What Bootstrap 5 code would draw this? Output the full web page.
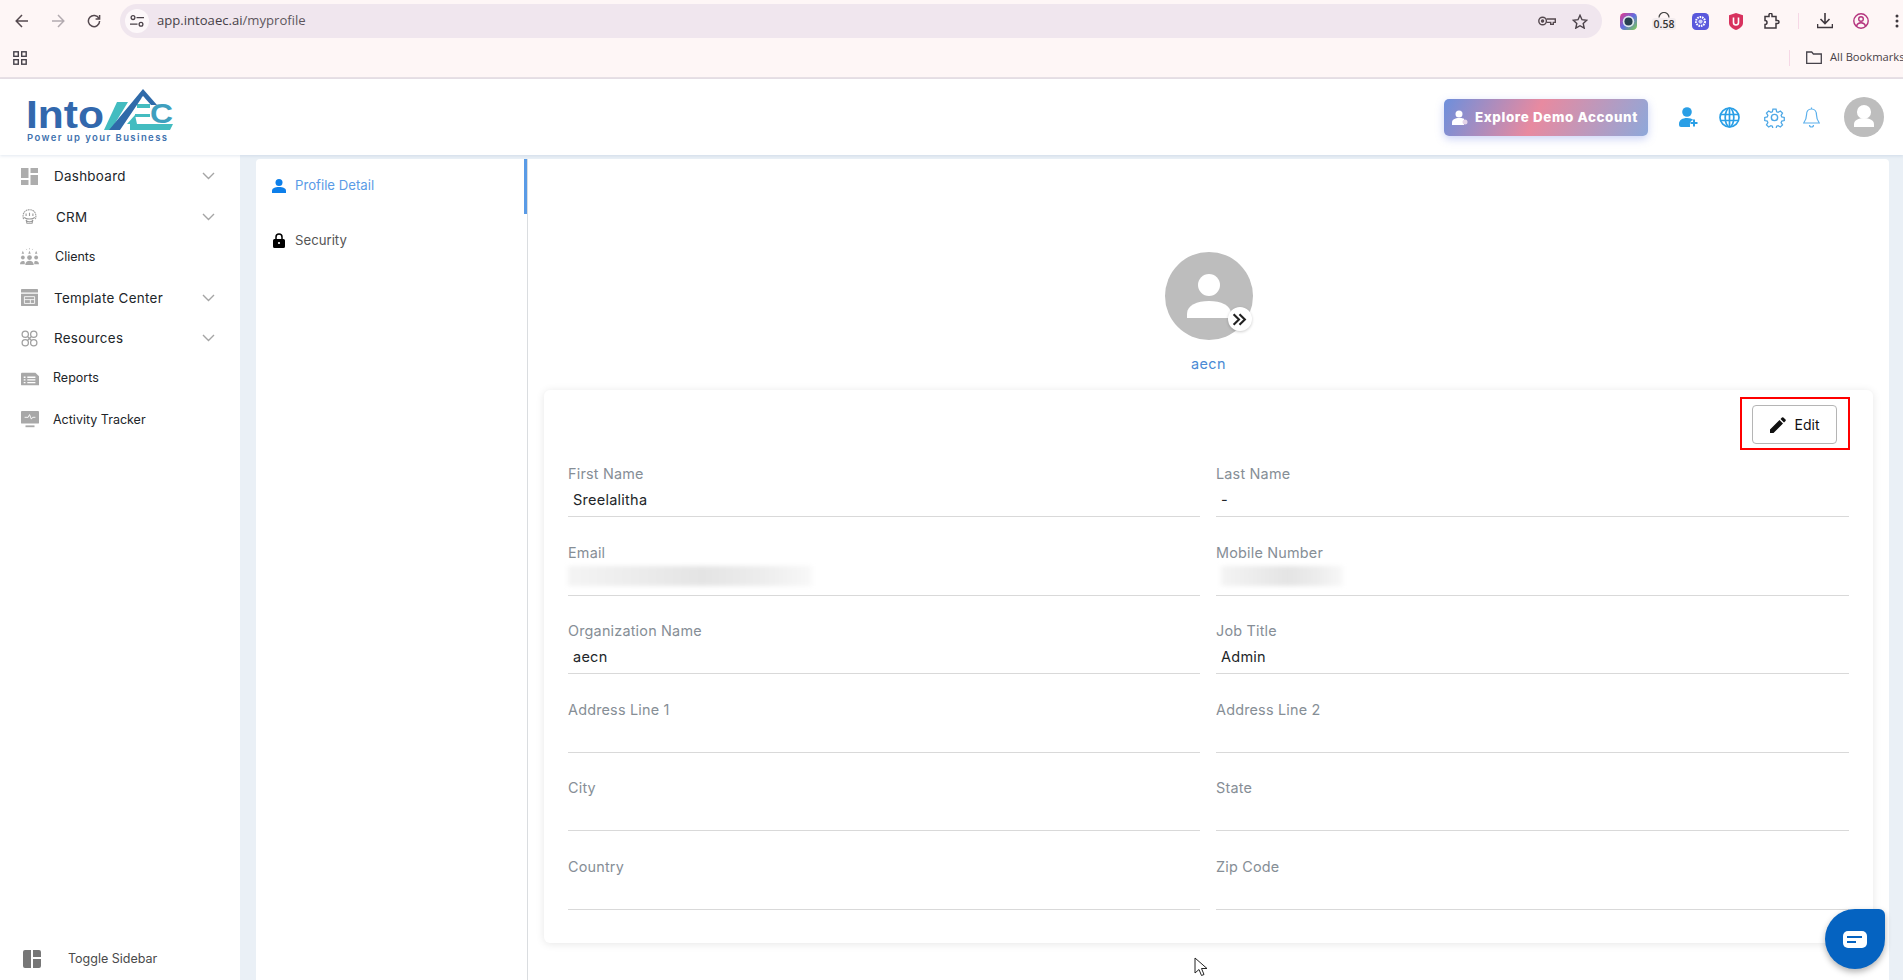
<!doctype html>
<html lang="en"><head><meta charset="utf-8"><title>IntoAEC profile</title>
<link href="https://cdn.jsdelivr.net/npm/bootstrap@5.3.0/dist/css/bootstrap.min.css" rel="stylesheet">
<style>
html,body{height:980px;overflow:hidden}
body{font-family:Inter,"Liberation Sans",sans-serif;background:#eaf0f6;color:#212529;font-size:14px;width:1903px}
.chrome-wrap{height:79px;background:#fef6f6;border-bottom:2px solid #e9e1e6;font-family:"Open Sans","Liberation Sans",sans-serif;color:#474147}
.tool-row{height:42px;padding:0 0 0 4px}
.tool-btn{width:36px;height:34px;flex:none}
.url-pill{width:1482px;height:34px;margin-left:8px;background:#f0e6ee;border-radius:17px;padding:0 14px 0 5px;flex:none}
.site-chip{width:24px;height:24px;background:#fdf8fa;border-radius:50%;flex:none}
.url-text{font-size:13.1px;margin-left:8px;color:#463f47}
.url-path{color:#5d565d}
.ext-first{margin-left:8px}
.ext-sep{width:1px;height:16px;background:#f6d8e6;margin:0 8px 0 8px;flex:none}
.gauge-num{font-size:10.5px;font-weight:600;line-height:12px;background:#f3ecee;border-radius:3px;padding:0 2px;color:#333}
.book-row{height:31px;padding-left:13px}
.book-sep{width:1px;height:16px;background:#f6d8e6;margin-left:1776px;flex:none}
.book-text{font-size:11.2px;white-space:nowrap}
.app-head{height:76px;background:#fff;box-shadow:0 1px 3px rgba(90,130,170,.18);position:relative;z-index:2;padding-right:19px}
.logo-box{margin-left:24px;line-height:0}
.demo-btn{width:204px;height:37px;border-radius:5px;background:linear-gradient(115deg,#6d8fdc 0%,#e88aa0 45%,#8ea8da 100%);box-shadow:0 3px 8px rgba(110,130,230,.35);color:#fff;font-size:13.4px;font-weight:800;margin-right:31px;padding-left:8px;flex:none}
.demo-btn span{margin-left:7px;letter-spacing:.62px;white-space:nowrap}
.head-ico{flex:none}
.head-avatar{margin-left:24px}
.body-row{height:825px}
.side-bar{width:240px;background:#fff;flex:none;padding-top:1px}
.side-item{height:40.5px;padding-left:21px;color:#212529;white-space:nowrap;font-size:13.4px;letter-spacing:.3px}
.side-mini{font-size:12.5px;letter-spacing:0}
.side-last{margin-top:1px}
.side-ico{width:17px;height:17px;flex:none;margin-right:16px}
.side-ico-b{margin-right:18px}
.side-ico-c{width:19px;height:19px;margin-left:-1px;margin-right:16px}
.side-ico-d{width:18px;height:18px;margin-right:14px}
.side-chev{margin-left:auto;margin-right:25px}
.toggle-item{padding:0 0 0 23px;height:20px;margin-bottom:11px;font-size:12.5px;color:#4a4a4a}
.toggle-item svg{margin-right:27px}
.main-panel{width:1633px;margin:4px 0 0 16px;background:#fff;border-radius:4px 4px 0 0;flex:none}
.sub-nav{width:272px;border-right:1px solid #dadde0;flex:none;font-size:13.2px}
.sub-item{height:55px;padding:0 0 2px 16px;color:#555}
.sub-item svg{margin-right:9px}
.sub-active{color:#5a9be6;box-shadow:inset -3px 0 0 #5a9be6}
.profile-area{flex:1;padding:0 16px 0 16px;min-width:0}
.avatar-stack{padding-top:93px;height:231px}
.big-avatar{position:relative;width:88px;height:88px}
.swap-badge{position:absolute;right:1px;bottom:9px;width:24px;height:24px;border-radius:50%;background:#fff;box-shadow:0 1px 3px rgba(0,0,0,.2)}
.who-name{color:#4a8ad4;font-size:14.4px;letter-spacing:.5px;margin-top:14px;line-height:20px}
.info-card{height:553px;border-radius:6px;box-shadow:0 1px 8px rgba(0,0,0,.1);padding:7px 24px 0 24px;background:#fff}
.mark-box{width:110px;height:53px;border:2.5px solid #f00;margin:0 -1px 0 auto;display:flex;align-items:center;justify-content:center;padding:2px 1px 0 0}
.edit-btn{width:85px;height:39px;border:1px solid #b5b5b5;border-radius:4px;background:#fff;font-size:14px;color:#111;padding:0}
.edit-btn svg{margin-right:9px}
.field-grid{display:grid;grid-template-columns:632px 633px;column-gap:16px;margin-top:13px}
.field-cell{height:78.6px}
.field-lab{color:#868e96;font-size:14.4px;letter-spacing:.2px;line-height:20px;padding-top:1px}
.field-val{height:33px;border-bottom:1px solid #d9d9d9;padding:3px 0 0 5px;font-size:14.5px;letter-spacing:.25px;line-height:26px;color:#212529}
.blur-bar{height:20px;margin:0 0 0 -5px;background:linear-gradient(90deg,#f4f4f4,#e4e4e4 55%,#ededed 80%,#f8f8f8);filter:blur(2px)}
.blur-short{margin-left:0}
.chat-drop{position:fixed;left:1825px;top:909px;width:60px;height:60px;background:#0563c1;border-radius:50% 6px 50% 50%;box-shadow:0 3px 6px rgba(0,0,0,.3)}
.mouse-arrow{position:fixed;left:1194px;top:957px}
</style></head>
<body>
<div class="chrome-wrap">
  <div class="tool-row d-flex align-items-center">
    <div class="tool-btn d-flex align-items-center justify-content-center"><svg width="14" height="14" viewBox="0 0 14 14" fill="none" stroke="#55494f" stroke-width="1.5"><path d="M13 7H1.5M7 1 1.2 7 7 13"/></svg></div>
    <div class="tool-btn d-flex align-items-center justify-content-center"><svg width="14" height="14" viewBox="0 0 14 14" fill="none" stroke="#b3abb0" stroke-width="1.5"><path d="M1 7h11.5M7 1l5.8 6L7 13"/></svg></div>
    <div class="tool-btn d-flex align-items-center justify-content-center"><svg width="14" height="14" viewBox="0 0 14 14" fill="none" stroke="#55494f" stroke-width="1.5"><path d="M12 4.5A5.6 5.6 0 1 0 12.6 7M12.6 1v4h-4"/></svg></div>
    <div class="url-pill d-flex align-items-center">
      <div class="site-chip d-flex align-items-center justify-content-center"><svg width="14" height="12" viewBox="0 0 14 12" fill="none" stroke="#4b4249" stroke-width="1.3"><circle cx="3" cy="2.6" r="1.9"/><path d="M6.5 2.6H14M0 9.2h7.5"/><circle cx="11" cy="9.2" r="1.9"/></svg></div>
      <span class="url-text">app.intoaec.ai<span class="url-path">/myprofile</span></span>
      <svg class="ms-auto" width="18" height="10" viewBox="0 0 18 10" fill="none" stroke="#55494f" stroke-width="1.4"><circle cx="4.6" cy="5" r="3.8"/><circle cx="4.6" cy="5" r="1" fill="#55494f"/><path d="M8.5 3h8.8v3.4h-2v2h-2.6v-2H8.5"/></svg>
      <svg class="ms-3" width="16" height="15" viewBox="0 0 16 15" fill="none" stroke="#4b4249" stroke-width="1.4"><path d="m8 1.3 2 4.4 4.7.5-3.500 3.200 1 4.700L8 11.700l-4.200 2.400 1-4.700L1.300 6.200 6 5.700z"/></svg>
    </div>
    <div class="tool-btn ext-first d-flex align-items-center justify-content-center"><svg width="17" height="17" viewBox="0 0 16 16"><defs><linearGradient id="rb" x1="0" y1="0" x2="1" y2="1"><stop offset="0" stop-color="#e8358a"/><stop offset=".5" stop-color="#5f6ee0"/><stop offset="1" stop-color="#7fd24a"/></linearGradient></defs><rect width="16" height="16" rx="4" fill="url(#rb)"/><circle cx="8" cy="8" r="5.400" fill="#dfe8ee"/><circle cx="8" cy="8" r="3.800" fill="#28414f"/></svg></div>
    <div class="tool-btn d-flex flex-column align-items-center justify-content-center"><svg width="12" height="6" viewBox="0 0 12 6" fill="none" stroke="#444" stroke-width="1.200"><path d="M1 5.500a5 5 0 0 1 10 0M4 1l2-1 2 1"/></svg><span class="gauge-num">0.58</span></div>
    <div class="tool-btn d-flex align-items-center justify-content-center"><svg width="17" height="17" viewBox="0 0 16 16"><rect width="16" height="16" rx="4" fill="#5a58dc"/><circle cx="8" cy="8" r="4.200" fill="none" stroke="#fff" stroke-width="2" stroke-dasharray="1.500 .8"/><circle cx="8" cy="8" r="2" fill="#cfd0fa"/></svg></div>
    <div class="tool-btn d-flex align-items-center justify-content-center"><svg width="14" height="17" viewBox="0 0 14 17"><path d="M7 0 14 2.200V10c0 3-3 5.500-7 7-4-1.500-7-4-7-7V2.200z" fill="#d8325e"/><path d="M4.500 4.500v5a2.500 2.500 0 0 0 5 0v-5" fill="none" stroke="#fff" stroke-width="1.600"/></svg></div>
    <div class="tool-btn d-flex align-items-center justify-content-center"><svg width="16" height="16" viewBox="0 0 16 16" fill="none" stroke="#3f383e" stroke-width="1.500"><path d="M1 3.500h4V1.800a1.500 1.500 0 0 1 3 0v1.700h4v4h1.500a1.500 1.500 0 0 1 0 3H12v4.500H1v-3.500a2 2 0 0 0 0-4z"/></svg></div>
    <div class="ext-sep"></div>
    <div class="tool-btn d-flex align-items-center justify-content-center"><svg width="16" height="16" viewBox="0 0 16 16" fill="none" stroke="#3f383e" stroke-width="1.600"><path d="M8 0v10M3.500 6 8 10.500 12.500 6M.5 11v3.500h15V11"/></svg></div>
    <div class="tool-btn d-flex align-items-center justify-content-center"><svg width="16" height="16" viewBox="0 0 16 16" fill="none" stroke="#b4347e" stroke-width="1.400"><circle cx="8" cy="8" r="7.200"/><circle cx="8" cy="6" r="2.300"/><path d="M3.500 13c.8-2.400 2.500-3.200 4.500-3.200s3.700.8 4.500 3.200"/></svg></div>
    <div class="tool-btn d-flex align-items-center justify-content-center"><svg width="4" height="14" viewBox="0 0 4 14" fill="#3f383e"><circle cx="2" cy="2" r="1.500"/><circle cx="2" cy="7" r="1.500"/><circle cx="2" cy="12" r="1.500"/></svg></div>
  </div>
  <div class="book-row d-flex align-items-center">
    <svg width="14" height="14" viewBox="0 0 14 14" fill="none" stroke="#46424a" stroke-width="1.400" style="flex:none;margin-right:-14px"><rect x=".8" y=".8" width="4.500" height="4.500"/><rect x="8.700" y=".8" width="4.500" height="4.500"/><rect x=".8" y="8.700" width="4.500" height="4.500"/><rect x="8.700" y="8.700" width="4.500" height="4.500"/></svg>
    <div class="book-sep"></div>
    <svg class="ms-3" width="16" height="13" viewBox="0 0 16 13" fill="none" stroke="#46424a" stroke-width="1.300" style="flex:none"><path d="M.7 1h5l1.700 2h7.900v9.300H.7z"/></svg>
    <span class="book-text ms-2">All Bookmarks</span>
  </div>
</div>
<header class="app-head d-flex align-items-center">
  <div class="logo-box">
    <svg width="152" height="60" viewBox="0 0 152 60" role="img" aria-label="IntoAEC logo">
      <text x="2" y="41" font-family="Liberation Sans,sans-serif" font-weight="700" font-size="39" fill="#3268ad" textLength="78" lengthAdjust="spacingAndGlyphs">Into</text>
      <path d="M93 15h11L87 43h-7z" fill="#43bcc0"/>
      <path d="M103 37l8-9 2 9z" fill="#43bcc0"/>
      <path d="M113 17h13v4h-13zM111 27h15v3h-15zM106 37h43l-3 6h-40z" fill="#43bcc0"/>
      <text x="126" y="36" font-family="Liberation Sans,sans-serif" font-weight="700" font-size="27" fill="#3f9fbe" textLength="23" lengthAdjust="spacingAndGlyphs">C</text>
      <path d="M119 2l14 16h-6l-8-9-23 34H85z" fill="#2f6aa9"/>
      <circle cx="119" cy="11" r="1.300" fill="#fff"/>
      <text x="3" y="54" font-family="Inter,sans-serif" font-weight="600" font-size="9.500" fill="#3f72ae" textLength="140">Power up your Business</text>
    </svg>
  </div>
  <div class="demo-btn d-flex align-items-center ms-auto">
    <svg width="16" height="15" viewBox="0 0 16 15" fill="#fff"><circle cx="7" cy="4" r="3.500"/><path d="M0 15v-2.500C0 9.500 3 8 7 8s5 .8 5 .8V15z"/><circle cx="13" cy="12" r="2.500" fill="#e4d4e8"/></svg>
    <span>Explore Demo Account</span>
  </div>
  <svg class="head-ico" width="20" height="20" viewBox="0 0 20 20" style="margin-right:20px" fill="#2a9fe6"><circle cx="8" cy="5" r="4.800"/><path d="M0 20v-3c0-4 3.500-6 8-6 3 0 5 .8 6.500 2A4 4 0 0 0 11 18v2H2a2 2 0 0 1-2-2z"/><path d="M15 12.500v7M11.500 16h7" stroke="#2a9fe6" stroke-width="2" fill="none"/></svg>
  <svg class="head-ico" width="21" height="21" viewBox="0 0 21 21" style="margin-right:24px" fill="none" stroke="#2a9fe6" stroke-width="1.700"><circle cx="10.500" cy="10.500" r="9.500"/><ellipse cx="10.500" cy="10.500" rx="4.300" ry="9.500"/><path d="M1.500 7.500h18M1.500 13.500h18M10.500 1v19"/></svg>
  <svg class="head-ico" width="21" height="21" viewBox="0 0 24 24" style="margin-right:18px" fill="none" stroke="#4ea8e6" stroke-width="1.600"><circle cx="12" cy="12" r="3.600"/><path d="M10 1.500h4l.7 3.200 1.900.8 2.800-1.800 2.800 2.800-1.800 2.800.8 1.900 3.200.7v4l-3.200.7-.8 1.900 1.800 2.800-2.800 2.800-2.800-1.800-1.900.8-.7 3.200h-4l-.7-3.200-1.900-.8-2.800 1.800-2.800-2.800 1.800-2.800-.8-1.900-3.200-.7v-4l3.200-.7.8-1.900-1.800-2.800 2.800-2.800 2.800 1.800 1.900-.8z" transform="translate(1.200 1.200) scale(.9)"/></svg>
  <svg class="head-ico" width="17" height="21" viewBox="0 0 17 21" fill="none" stroke="#5cb0ec" stroke-width="1.200"><path d="M8.500 2C5 2 3.500 5 3.500 8c0 4-1.300 6-2.800 8h15.600c-1.500-2-2.800-4-2.800-8 0-3-1.500-6-5-6zM8.500.5V2M6.500 18a2 2 0 0 0 4 0"/></svg>
  <svg class="head-avatar" width="40" height="40" viewBox="0 0 88 88"><circle cx="44" cy="44" r="44" fill="#bdbdbd"/><circle cx="44" cy="33" r="15.500" fill="#fff"/><path d="M22 66v-6c0-9 10-13 22-13s22 4 22 13v6z" fill="#fff"/></svg>
</header>
<div class="body-row d-flex">
  <aside class="side-bar d-flex flex-column">
    <div class="side-item d-flex align-items-center"><svg class="side-ico" viewBox="0 0 17 17" fill="#adadad"><rect width="7.500" height="10"/><rect x="9.500" width="7.500" height="5"/><rect y="12" width="7.500" height="5"/><rect x="9.500" y="7" width="7.500" height="10"/></svg>Dashboard<svg class="side-chev" width="13" height="8" viewBox="0 0 13 8" fill="none" stroke="#a5a5a5" stroke-width="1.400"><path d="m1 1 5.500 5.500L12 1"/></svg></div>
    <div class="side-item d-flex align-items-center"><svg class="side-ico side-ico-b" viewBox="0 0 20 20" fill="none" stroke="#9a9a9a" stroke-width="1.300"><path d="M3 13C1 6 5 2 10 2s9 4 7 11" stroke-dasharray="2 .7"/><path d="M6 6.500v3M10 5.500v4M14 6.500v3M4 11c1 2 3 2 6 2s5 0 6-2M6 14c1 3 7 3 8 0l-1 4H7z"/></svg>CRM<svg class="side-chev" width="13" height="8" viewBox="0 0 13 8" fill="none" stroke="#a5a5a5" stroke-width="1.400"><path d="m1 1 5.500 5.500L12 1"/></svg></div>
    <div class="side-item side-mini d-flex align-items-center"><svg class="side-ico side-ico-c" viewBox="0 0 20 20" fill="#a8a8a8"><path d="m3 3 1.300 3H1.700zM10 3l1.300 3H8.700zM17 3l1.300 3h-2.600z"/><path d="M10 0v1.500M6.500 1l.7 1M13.500 1l-.7 1" stroke="#bbb" stroke-width=".8"/><circle cx="3" cy="10" r="2"/><circle cx="17" cy="10" r="2"/><circle cx="10" cy="10" r="2.500"/><path d="M0 17c0-4 5-4 5-2v2zM20 17c0-4-5-4-5-2v2zM5.500 18c0-6 9-6 9 0z"/></svg>Clients</div>
    <div class="side-item d-flex align-items-center"><svg class="side-ico" viewBox="0 0 20 20" fill="#a8a8a8"><path d="M1 0h18a1 1 0 0 1 1 1v3H0V1a1 1 0 0 1 1-1zM0 5.500h20V19a1 1 0 0 1-1 1H1a1 1 0 0 1-1-1z"/><path d="M4 9h12v8H4zM4 12.500h12M11 12.500V17" fill="none" stroke="#fff" stroke-width="1"/></svg>Template Center<svg class="side-chev" width="13" height="8" viewBox="0 0 13 8" fill="none" stroke="#a5a5a5" stroke-width="1.400"><path d="m1 1 5.500 5.500L12 1"/></svg></div>
    <div class="side-item d-flex align-items-center"><svg class="side-ico" viewBox="0 0 20 20" fill="none" stroke="#a0a0a0" stroke-width="1.500"><circle cx="5" cy="5" r="3.700"/><circle cx="15" cy="5" r="3.700"/><circle cx="5" cy="15" r="3.700"/><circle cx="15" cy="15" r="3.700"/><path d="M8 8l4 4M12 8l-4 4"/></svg>Resources<svg class="side-chev" width="13" height="8" viewBox="0 0 13 8" fill="none" stroke="#a5a5a5" stroke-width="1.400"><path d="m1 1 5.500 5.500L12 1"/></svg></div>
    <div class="side-item side-mini d-flex align-items-center"><svg class="side-ico side-ico-d" viewBox="0 0 20 20" fill="#a8a8a8"><path d="M1 3h15l4 4v10H1a1 1 0 0 1-1-1V4a1 1 0 0 1 1-1z"/><path d="M3 8h2M3 11h2M3 14h2M7 8h9M7 11h9M7 14h9" stroke="#fff" stroke-width="1.500"/></svg>Reports</div>
    <div class="side-item side-mini side-last d-flex align-items-center"><svg class="side-ico side-ico-d" viewBox="0 0 20 20" fill="#a8a8a8"><rect y="0" width="20" height="14" rx="1"/><path d="M4 7h4l1.500-3 2 5 1.500-2h3" fill="none" stroke="#fff" stroke-width="1"/><rect x="5" y="16" width="10" height="2"/></svg>Activity Tracker</div>
    <div class="toggle-item d-flex align-items-center mt-auto"><svg width="18" height="18" viewBox="0 0 18 18" fill="#777"><path d="M2 0h6v18H2a2 2 0 0 1-2-2V2a2 2 0 0 1 2-2zM10 0h6a2 2 0 0 1 2 2v5h-8zM10 9h8v7a2 2 0 0 1-2 2h-6z"/></svg>Toggle Sidebar</div>
  </aside>
  <main class="main-panel d-flex">
    <nav class="sub-nav">
      <div class="sub-item sub-active d-flex align-items-center"><svg width="14" height="14" viewBox="0 0 14 14" fill="#0d7fea"><circle cx="7" cy="3.500" r="3.500"/><path d="M0 14v-2c0-3 3-4 7-4s7 1 7 4v2z"/></svg>Profile Detail</div>
      <div class="sub-item d-flex align-items-center"><svg width="14" height="15" viewBox="0 0 12 15" fill="#000"><path d="M1.500 6h9A1.500 1.500 0 0 1 12 7.500v6a1.500 1.500 0 0 1-1.500 1.500h-9A1.500 1.500 0 0 1 0 13.500v-6A1.500 1.500 0 0 1 1.500 6z"/><path d="M3 6.500V4a3 3 0 0 1 6 0v2.500" fill="none" stroke="#000" stroke-width="1.500"/><circle cx="6" cy="10" r="1.100" fill="#fff"/></svg>Security</div>
    </nav>
    <section class="profile-area">
      <div class="avatar-stack d-flex flex-column align-items-center">
        <div class="big-avatar">
          <svg width="88" height="88" viewBox="0 0 88 88"><circle cx="44" cy="44" r="44" fill="#bdbdbd"/><circle cx="44" cy="33" r="11" fill="#fff"/><path d="M22 66v-4c0-9 10-13 22-13s22 4 22 13v4z" fill="#fff"/></svg>
          <div class="swap-badge d-flex align-items-center justify-content-center"><svg width="15" height="13" viewBox="0 0 14 12" fill="none" stroke="#222" stroke-width="2"><path d="m1.500 1 5 5-5 5M7 1l5 5-5 5"/></svg></div>
        </div>
        <div class="who-name">aecn</div>
      </div>
      <div class="info-card">
        <div class="mark-box"><button type="button" class="edit-btn d-flex align-items-center justify-content-center"><svg width="16" height="16" viewBox="0 0 16 16" fill="#111"><path d="M0 16v-3.500L9.500 3 13 6.500 3.500 16zM10.500 2l1.500-1.500a1 1 0 0 1 1.400 0l2.100 2.100a1 1 0 0 1 0 1.400L14 5.500z"/></svg>Edit</button></div>
        <div class="field-grid">
          <div class="field-cell"><div class="field-lab">First Name</div><div class="field-val">Sreelalitha</div></div>
          <div class="field-cell"><div class="field-lab">Last Name</div><div class="field-val">-</div></div>
          <div class="field-cell"><div class="field-lab">Email</div><div class="field-val"><div class="blur-bar" style="width:244px"></div></div></div>
          <div class="field-cell"><div class="field-lab">Mobile Number</div><div class="field-val"><div class="blur-bar blur-short" style="width:122px"></div></div></div>
          <div class="field-cell"><div class="field-lab">Organization Name</div><div class="field-val">aecn</div></div>
          <div class="field-cell"><div class="field-lab">Job Title</div><div class="field-val">Admin</div></div>
          <div class="field-cell"><div class="field-lab">Address Line 1</div><div class="field-val"></div></div>
          <div class="field-cell"><div class="field-lab">Address Line 2</div><div class="field-val"></div></div>
          <div class="field-cell"><div class="field-lab">City</div><div class="field-val"></div></div>
          <div class="field-cell"><div class="field-lab">State</div><div class="field-val"></div></div>
          <div class="field-cell"><div class="field-lab">Country</div><div class="field-val"></div></div>
          <div class="field-cell"><div class="field-lab">Zip Code</div><div class="field-val"></div></div>
        </div>
      </div>
    </section>
  </main>
</div>
<div class="chat-drop d-flex align-items-center justify-content-center"><svg width="24" height="17" viewBox="0 0 24 17"><rect width="24" height="17" rx="5" fill="#fff"/><path d="M4 6h15M4 11h9" stroke="#0563c1" stroke-width="2"/></svg></div>
<svg class="mouse-arrow" width="14" height="20" viewBox="0 0 14 20"><path d="M1 1v15l4-3.500 2.500 6 2.500-1-2.500-6H13z" fill="#fff" stroke="#222" stroke-width="1"/></svg>
</body></html>
